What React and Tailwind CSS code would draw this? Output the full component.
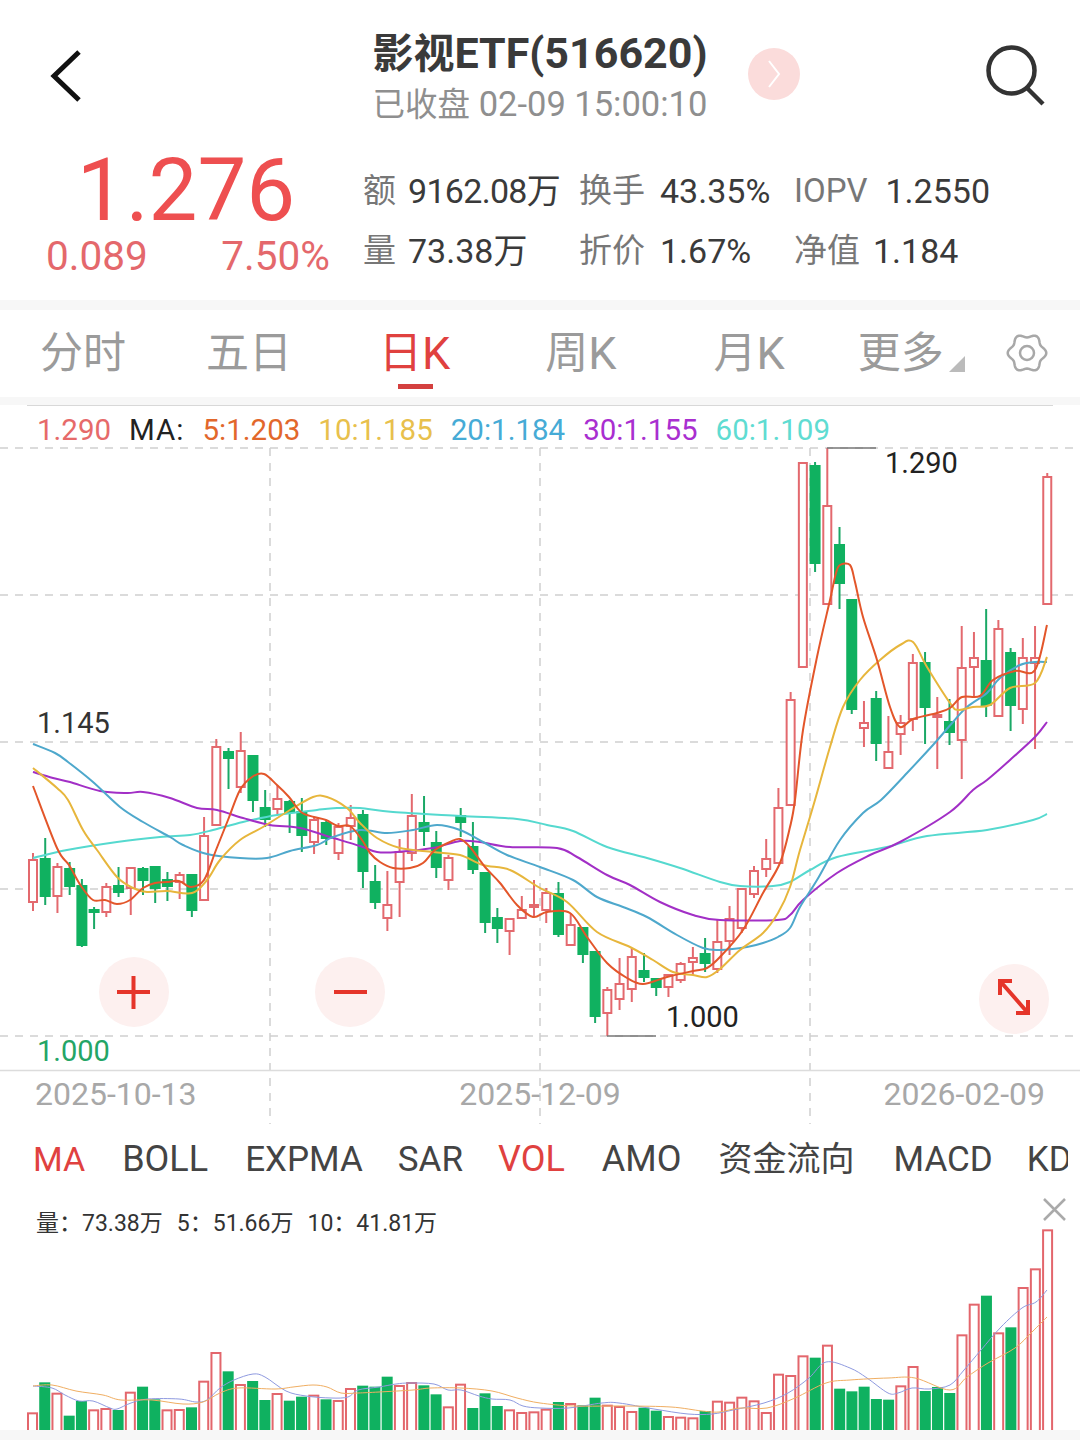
const FONT = { fontFamily: '"Roboto", "Noto Sans CJK SC", sans-serif' };

// [high, bodyTop, bodyBottom, low, r/g]
const candles = [
    [853, 860, 902, 911, 'r'], [838, 859, 896, 905, 'g'], [863, 867, 896, 913, 'r'], [862, 869, 886, 895, 'g'],
    [879, 886, 945, 947, 'g'], [907, 910, 912, 929, 'g'], [883, 887, 912, 917, 'r'], [867, 886, 892, 897, 'g'],
    [868, 868, 888, 915, 'r'], [867, 869, 880, 895, 'g'], [866, 867, 888, 903, 'g'], [872, 880, 886, 901, 'g'],
    [872, 875, 882, 899, 'r'], [875, 875, 910, 917, 'g'], [817, 836, 900, 900, 'r'], [739, 747, 825, 825, 'r'],
    [748, 752, 758, 789, 'g'], [732, 751, 787, 793, 'r'], [756, 756, 800, 812, 'g'], [790, 808, 819, 827, 'g'],
    [785, 799, 809, 814, 'r'], [800, 802, 812, 833, 'g'], [798, 812, 835, 852, 'g'], [817, 820, 842, 854, 'r'],
    [820, 823, 838, 845, 'g'], [823, 827, 853, 860, 'r'], [805, 818, 826, 840, 'r'], [810, 815, 871, 888, 'g'],
    [865, 882, 902, 909, 'g'], [871, 905, 918, 931, 'r'], [839, 852, 882, 917, 'r'], [794, 816, 853, 861, 'r'],
    [796, 823, 831, 846, 'g'], [831, 843, 867, 878, 'g'], [855, 858, 880, 890, 'r'], [808, 816, 822, 837, 'g'],
    [822, 847, 869, 874, 'g'], [873, 873, 922, 933, 'g'], [908, 918, 928, 943, 'g'], [918, 919, 931, 955, 'r'],
    [896, 910, 918, 919, 'r'], [880, 905, 906, 917, 'r'], [888, 893, 910, 923, 'r'], [882, 894, 934, 937, 'g'],
    [913, 925, 945, 945, 'r'], [928, 928, 954, 963, 'g'], [952, 952, 1016, 1023, 'g'], [987, 990, 1013, 1036, 'r'],
    [958, 984, 999, 1010, 'r'], [948, 957, 989, 1002, 'r'], [953, 971, 977, 982, 'g'], [978, 979, 987, 996, 'g'],
    [975, 975, 987, 997, 'r'], [962, 964, 980, 983, 'r'], [947, 958, 962, 975, 'r'], [938, 954, 963, 972, 'g'],
    [920, 942, 969, 973, 'r'], [906, 919, 941, 955, 'r'], [889, 889, 928, 933, 'r'], [866, 871, 894, 898, 'r'],
    [839, 859, 869, 877, 'r'], [788, 808, 863, 863, 'r'], [692, 700, 805, 805, 'r'], [463, 463, 667, 667, 'r'],
    [462, 466, 563, 572, 'g'], [448, 506, 604, 604, 'r'], [527, 545, 583, 609, 'g'], [600, 600, 709, 714, 'g'],
    [701, 723, 728, 747, 'r'], [691, 699, 743, 761, 'g'], [716, 752, 768, 768, 'r'], [715, 723, 734, 755, 'r'],
    [654, 663, 719, 731, 'r'], [652, 663, 707, 744, 'g'], [697, 715, 717, 769, 'r'], [699, 722, 732, 745, 'g'],
    [626, 668, 740, 779, 'r'], [632, 658, 667, 697, 'r'], [609, 661, 705, 717, 'g'], [620, 629, 716, 716, 'r'],
    [648, 653, 705, 731, 'g'], [638, 658, 709, 724, 'r'], [626, 658, 663, 749, 'r'], [473, 477, 604, 604, 'r'],
];

const ma5 = '33,786 57,848 69,865 81,886 93,900 105,900 117,904 130,900 143,888 155,883 167,882 179,881 191,887 204,880 216,850 228,820 240,790 252,777 264,774 277,785 289,797 301,812 314,817 326,820 338,826 350,826 362,840 370,853 380,862 393,868 410,868 423,863 435,850 450,842 460,839 470,847 485,867 500,883 517,905 533,917 547,912 570,913 587,937 607,963 627,978 643,984 667,977 693,971 707,968 720,957 743,930 763,893 780,863 790,827 795,800 803,730 817,657 830,600 836,573 840,565 850,565 855,582 863,617 877,660 890,707 900,727 913,719 937,713 950,708 962,697 980,696 993,680 1015,671 1035,670 1047,625';
const ma10 = '33,768 57,788 68,800 83,830 97,850 117,877 133,888 147,892 167,891 192,893 207,880 220,860 240,840 263,827 290,810 313,797 327,797 347,808 360,823 377,838 400,848 433,852 460,855 483,865 510,870 540,888 567,902 597,932 630,947 653,960 673,972 693,975 707,977 720,969 740,950 763,933 778,913 790,887 800,850 815,800 830,747 843,707 860,680 880,660 900,645 913,642 927,667 950,703 958,710 973,707 990,705 1010,688 1035,683 1047,657';
const ma20 = '33,744 55,753 68,762 93,782 120,807 143,822 170,837 183,845 207,854 240,858 267,858 290,851 317,845 333,837 360,830 387,833 413,830 437,825 460,830 483,842 507,855 540,867 573,880 597,897 623,907 647,917 677,935 703,948 720,950 747,947 763,943 778,937 790,928 800,907 817,880 840,840 863,813 881,800 907,773 933,745 953,722 967,707 987,693 1000,678 1020,665 1035,662 1047,662';
const ma30 = '33,772 53,778 70,782 100,791 127,793 143,792 170,798 197,808 217,810 243,818 270,825 300,828 330,837 360,846 377,852 397,852 433,848 460,841 480,842 510,847 557,848 577,857 607,875 630,885 660,902 693,915 720,920 777,920 790,915 803,900 837,873 870,855 900,842 950,812 973,790 987,780 1010,760 1035,737 1047,722';
const ma60 = '33,858 67,850 117,842 160,837 190,835 213,830 243,822 277,815 317,810 337,808 360,808 393,812 460,816 517,819 547,825 573,831 607,847 647,858 680,868 720,882 740,886 773,886 790,882 810,870 837,857 887,847 927,836 987,830 1033,820 1047,814';

// bar heights, read off the 3x crops
const volHeights = [53, 143, 112, 43, 87, 62, 66, 60, 115, 130, 92, 62, 63, 68, 148, 234, 176, 138, 147, 90, 111, 88, 100, 106, 92, 90, 126, 133, 130, 160, 135, 144, 134, 107, 71, 139, 66, 110, 72, 62, 54, 56, 64, 84, 81, 74, 97, 76, 72, 57, 67, 58, 42, 40, 38, 57, 88, 85, 100, 89, 54, 169, 165, 224, 217, 256, 124, 116, 130, 93, 91, 134, 192, 117, 129, 111, 287, 379, 403, 293, 308, 429, 485, 602];
const volColors = 'rgrggrrgrggrrgrrgrggrggrgrrgggrrggrrgggrrrrgrggrrrggrrrgrrrrrrrrgrgggggrrgggrrgrgrrr';

const volMa5 = '33,1386 52,1388 65,1395 79,1401 93,1401 110,1408 117,1409 131,1403 148,1399 179,1399 196,1402 207,1400 220,1388 234,1380 253,1374 265,1377 286,1391 306,1396 331,1398 348,1397 358,1390 379,1387 396,1384 410,1383 434,1384 448,1390 461,1390 479,1396 492,1399 510,1400 523,1406 540,1408 568,1408 602,1403 619,1403 654,1409 688,1414 712,1414 733,1410 764,1403 788,1393 809,1378 826,1362 850,1368 867,1378 888,1393 898,1393 912,1388 929,1389 950,1385 964,1370 981,1350 1001,1327 1022,1308 1036,1302 1047,1290';
const volMa10 = '33,1386 52,1385 76,1391 103,1395 121,1400 152,1400 183,1404 203,1402 220,1393 238,1388 275,1389 293,1387 313,1385 327,1387 341,1393 358,1393 379,1392 413,1390 431,1388 461,1388 492,1391 517,1398 540,1403 574,1406 626,1406 671,1407 702,1411 719,1412 740,1408 767,1408 795,1398 826,1383 850,1380 888,1378 915,1378 950,1390 967,1377 988,1363 1015,1348 1032,1332 1047,1317';

// catmull-rom through the read off points
const smooth = (str) => {
    const p = str.split(' ').map((s) => s.split(',').map(Number));
    let d = `M${p[0][0]} ${p[0][1]}`;
    for (let i = 0; i < p.length - 1; i++) {
        const a = p[i - 1] || p[i];
        const b = p[i];
        const c = p[i + 1];
        const e = p[i + 2] || c;
        const c1 = [b[0] + (c[0] - a[0]) / 6, b[1] + (c[1] - a[1]) / 6];
        const c2 = [c[0] - (e[0] - b[0]) / 6, c[1] - (e[1] - b[1]) / 6];
        d += `C${c1[0].toFixed(1)} ${c1[1].toFixed(1)} ${c2[0].toFixed(1)} ${c2[1].toFixed(1)} ${c[0]} ${c[1]}`;
    }
    return d;
};

// six lobed gear outline
const gearPath = () => {
    const pts = [];
    for (let i = 0; i < 72; i++) {
        const t = (i / 72) * Math.PI * 2;
        const r = 17.4 + 1.9 * Math.cos(6 * t);
        pts.push(`${(22 + r * Math.cos(t)).toFixed(2)} ${(20 + r * Math.sin(t)).toFixed(2)}`);
    }
    return `M${pts.join('L')}Z`;
};

const Candle = ({ d, i }) => {
    const x = 33 + i * 12.22;
    const [high, top, bottom, low, kind] = d;
    const isUp = kind === 'r';
    const color = isUp ? '#e3696e' : '#10b160';
    return (
        <g>
            <line x1={x} x2={x} y1={high} y2={low} stroke={isUp ? '#e3696e' : '#1aa866'} strokeWidth="2" />
            {isUp ? (
                <rect x={x - 4} y={top} width="8" height={Math.max(bottom - top, 2)} fill="#fff" stroke={color} strokeWidth="2" />
            ) : (
                <rect x={x - 5.5} y={top - 1} width="11" height={Math.max(bottom - top + 2, 3)} fill={color} />
            )}
        </g>
    );
};

const VolumeBar = ({ h, kind, i }) => {
    const x = 32.5 + i * 12.23;
    const height = h / 3;
    if (kind === 'g') {
        return <rect x={x - 5.5} y={1430 - height} width="11" height={height} fill="#0fb160" />;
    }
    return <rect x={x - 4.5} y={1430 - height + 1} width="9" height={height} fill="#fff" stroke="#e3666c" strokeWidth="2" />;
};

const Stat = ({ label, value, gap, valueClass = '' }) => (
    <div className={`flex items-center whitespace-nowrap ${gap}`}>
        <span className="text-[33px] text-[#777]">{label}</span>
        <span className={`text-[#3a3a3a] ${valueClass}`}>{value}</span>
    </div>
);

const Tab = ({ children, active, className }) => (
    <div className={`relative flex h-full items-center leading-none ${active ? 'text-[#e0413f]' : 'text-[#9b9b9b]'} ${className}`}>
        {children}
        {active && <div className="absolute bottom-[8px] left-[19px] h-[5px] w-[35px] bg-[#d4403f]" />}
    </div>
);

const RoundButton = ({ className, children }) => (
    <div className={`absolute flex h-[70px] w-[70px] items-center justify-center rounded-full bg-[#fdf0ef] ${className}`}>
        <svg width="70" height="70" viewBox="0 0 70 70" fill="none" stroke="#e5352a" strokeWidth="4">
            {children}
        </svg>
    </div>
);

const PriceLabel = ({ className, children }) => (
    <div className={`absolute text-[29px] leading-none ${className}`}>{children}</div>
);

export default function App() {
    return (
        <div className="flex h-[1453px] w-[1080px] flex-col overflow-hidden bg-white" style={FONT}>
            {/* Header */}
            <div className="grid h-[150px] shrink-0 grid-cols-[372px_336px_1fr] pt-[30px]">
                <div className="pl-[50px] pt-[20px]">
                    <svg width="34" height="54" viewBox="0 0 34 54" fill="none" stroke="#111" strokeWidth="5">
                        <polyline points="29,2 4,26 29,50" />
                    </svg>
                </div>
                <div className="flex flex-col items-center">
                    <div className="whitespace-nowrap text-[43px] font-bold leading-[46px] text-[#3a3a3a]">
                        <span className="text-[41px]">影视</span>ETF(516620)
                    </div>
                    <div className="mt-[7px] whitespace-nowrap text-[34.5px] leading-[40px] text-[#8f8f8f]">
                        <span className="text-[32.5px]">已收盘</span> 02-09 15:00:10
                    </div>
                </div>
                <div className="flex items-start justify-between pl-[40px] pr-[33px] pt-[18px]">
                    <div className="flex h-[52px] w-[52px] items-center justify-center rounded-full bg-[#fbdcdb]">
                        <svg width="16" height="30" viewBox="0 0 16 30" fill="none" stroke="#fff" strokeWidth="2">
                            <polyline points="3,2 13,15 3,28" />
                        </svg>
                    </div>
                    <svg className="-mt-[4px]" width="62" height="62" viewBox="0 0 62 62" fill="none" stroke="#333" strokeWidth="4.5">
                        <circle cx="26.5" cy="26.5" r="23" />
                        <line x1="42" y1="44" x2="58" y2="60" />
                    </svg>
                </div>
            </div>

            {/* Quote */}
            <div className="flex h-[150px] shrink-0">
                <div className="flex w-[363px] shrink-0 flex-col items-center pr-[33px] pl-[46px]">
                    <div className="mr-[4px] text-[87px] font-normal leading-[80px] text-[#ee4f50]">1.276</div>
                    <div className="mt-[4px] flex w-full justify-between whitespace-nowrap text-[40.5px] leading-[44px] text-[#e4686c]">
                        <span>0.089</span>
                        <span>7.50%</span>
                    </div>
                </div>
                <div className="grid h-fit grid-cols-[216px_215px_1fr] gap-y-[20px] pt-[21px] text-[34px] leading-[40px]">
                    <Stat label="额" value="9162.08万" gap="gap-[12px]" valueClass="tracking-[-0.7px]" />
                    <Stat label="换手" value="43.35%" gap="gap-[15px]" />
                    <Stat label="IOPV" value="1.2550" gap="gap-[18px]" />
                    <Stat label="量" value="73.38万" gap="gap-[12px]" />
                    <Stat label="折价" value="1.67%" gap="gap-[15px]" />
                    <Stat label="净值" value="1.184" gap="gap-[13px]" />
                </div>
            </div>

            <div className="h-[10px] shrink-0 bg-[#f7f7f7]" />

            {/* Period tabs */}
            <div className="flex h-[87px] shrink-0 items-center pl-[40px] text-[43px]">
                <Tab>分时</Tab>
                <Tab className="ml-[80px]">五日</Tab>
                <Tab active className="ml-[87px]">日<span className="text-[45px]">K</span></Tab>
                <Tab className="ml-[95px]">周<span className="text-[45px]">K</span></Tab>
                <Tab className="ml-[97px]">月<span className="text-[45px]">K</span></Tab>
                <Tab className="ml-[73px]">更多</Tab>
                <span className="ml-[5px] mt-[20px] h-0 w-0 border-b-[16px] border-l-[16px] border-b-[#bbb] border-l-transparent" />
                <svg className="ml-[40px] -mt-[1px]" width="44" height="40" viewBox="0 0 44 40" fill="none" stroke="#a8a8a8" strokeWidth="2.5" strokeLinejoin="round">
                    <path d={gearPath()} />
                    <circle cx="22" cy="20" r="7" />
                </svg>
            </div>

            <div className="h-[8px] shrink-0 bg-[#f7f7f7]" />

            {/* K line chart */}
            <div className="relative grid h-[720px] shrink-0">
                <svg className="col-start-1 row-start-1" width="1080" height="720" viewBox="0 405 1080 720" fill="none">
                    <line x1="27" x2="1053" y1="405.5" y2="405.5" stroke="#d8d8d8" strokeWidth="1" />
                    {[448, 595, 742, 889, 1036].map((y) => (
                        <line key={y} x1="0" x2="1080" y1={y} y2={y} stroke="#cfcfcf" strokeWidth="1.5" strokeDasharray="8 7" />
                    ))}
                    {[270, 540, 810].map((x) => (
                        <line key={x} x1={x} x2={x} y1="448" y2="1124" stroke="#cfcfcf" strokeWidth="1.5" strokeDasharray="8 7" />
                    ))}
                    <line x1="0" x2="1080" y1="1070.5" y2="1070.5" stroke="#dcdcdc" strokeWidth="1.5" />
                    {candles.map((d, i) => (
                        <Candle key={i} d={d} i={i} />
                    ))}
                    <g strokeWidth="2" strokeLinejoin="round">
                        <path d={smooth(ma60)} stroke="#55d9cf" />
                        <path d={smooth(ma30)} stroke="#a22fc6" />
                        <path d={smooth(ma20)} stroke="#4ea8cc" />
                        <path d={smooth(ma10)} stroke="#e7b63c" />
                        <path d={smooth(ma5)} stroke="#e3562a" />
                    </g>
                    <path d="M827 448H876M607 1036H656" stroke="#777" strokeWidth="1.5" />
                </svg>

                <div className="col-start-1 row-start-1 flex flex-col justify-between">
                    <div className="flex h-[50px] items-center gap-[18px] whitespace-nowrap pl-[37px] pt-[2px] text-[29.5px] leading-none">
                        <span className="text-[#e66a6a]">1.290</span>
                        <span className="tracking-[1px] text-[#222]">MA:</span>
                        <span className="text-[#e2672b]">5:1.203</span>
                        <span className="text-[#e8c04c]">10:1.185</span>
                        <span className="text-[#46abd6]">20:1.184</span>
                        <span className="text-[#a92fd0]">30:1.155</span>
                        <span className="text-[#5fdcd2]">60:1.109</span>
                    </div>
                    <div className="flex h-[54px] items-center justify-between px-[35px] pb-[8px] text-[32px] leading-none text-[#a8a8a8]">
                        <span>2025-10-13</span>
                        <span>2025-12-09</span>
                        <span>2026-02-09</span>
                    </div>
                </div>

                <PriceLabel className="left-[37px] top-[304px] text-[#333]">1.145</PriceLabel>
                <PriceLabel className="left-[37px] top-[632px] text-[#24a566]">1.000</PriceLabel>
                <PriceLabel className="left-[885px] top-[44px] text-[#222]">1.290</PriceLabel>
                <PriceLabel className="left-[666px] top-[598px] text-[#222]">1.000</PriceLabel>

                <RoundButton className="left-[99px] top-[552px]">
                    <path d="M18 35H51M34.5 19V52" />
                </RoundButton>
                <RoundButton className="left-[315px] top-[552px]">
                    <path d="M19 35H52" />
                </RoundButton>
                <RoundButton className="left-[979px] top-[559px]">
                    <path d="M33 17H21V31M21 17L49 49M37 49H49V36" />
                </RoundButton>
            </div>

            {/* Indicator tabs */}
            <div className="mr-[12px] flex h-[70px] shrink-0 items-center gap-[37px] overflow-hidden whitespace-nowrap pb-[2px] pl-[33px] text-[35px] leading-none text-[#444]">
                <span className="text-[34px] text-[#e0413f]">MA</span>
                <span className="text-[36px]">BOLL</span>
                <span>EXPMA</span>
                <span className="-ml-[2px]">SAR</span>
                <span className="-ml-[2px] text-[36px] text-[#e0413f]">VOL</span>
                <span className="text-[36px]">AMO</span>
                <span className="text-[34px]">资金流向</span>
                <span className="ml-[2px]">MACD</span>
                <span className="-ml-[3px]">KDJ</span>
            </div>

            {/* Volume */}
            <div className="grid h-[235px] shrink-0">
                <svg className="col-start-1 row-start-1" width="1080" height="235" viewBox="0 1195 1080 235" fill="none">
                    {volHeights.map((h, i) => (
                        <VolumeBar key={i} h={h} kind={volColors[i]} i={i} />
                    ))}
                    <path d={smooth(volMa5)} stroke="#8f9ae0" strokeWidth="1" />
                    <path d={smooth(volMa10)} stroke="#f0ae62" strokeWidth="1" />
                    <path d="M1044 1199L1065 1220M1065 1199L1044 1220" stroke="#aaa" strokeWidth="2.5" />
                </svg>
                <div className="col-start-1 row-start-1 flex h-fit gap-[14px] pl-[36px] pt-[16px] text-[23px] leading-[26px] text-[#333]">
                    <span>量：73.38万</span>
                    <span>5：51.66万</span>
                    <span>10：41.81万</span>
                </div>
            </div>

            <div className="h-[10px] shrink-0 bg-[#f7f7f7]" />
        </div>
    );
}
